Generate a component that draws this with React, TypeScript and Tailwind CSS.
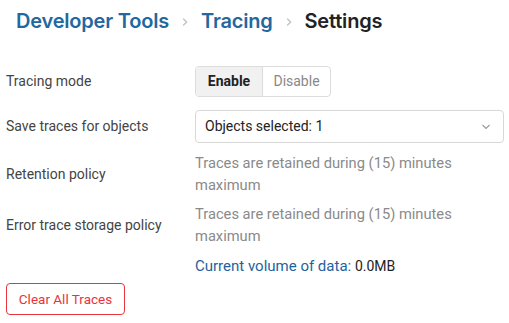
import React from "react";

export default function App() {
  return (
    <div className="w-[509px] h-[323px] bg-white overflow-hidden" style={{ fontFamily: "Roboto, 'Liberation Sans', sans-serif" }}>
      <div className="flex items-center gap-[12px] pl-[16px] pt-[5px] h-[36px] text-[20px] font-semibold" style={{ fontFamily: "Inter, 'Liberation Sans', Arial, sans-serif" }}>
        <span className="text-[#23679f] tracking-[-0.2px]">Developer Tools</span>
        <svg width="8" height="10" viewBox="0 0 8 10" className="mt-[2px]"><path d="M2.2 1.6 L5.6 5 L2.2 8.4" fill="none" stroke="#bdbdbd" strokeWidth="1.3" /></svg>
        <span className="text-[#23679f] tracking-[-0.2px]">Tracing</span>
        <svg width="8" height="10" viewBox="0 0 8 10" className="mt-[2px]"><path d="M2.2 1.6 L5.6 5 L2.2 8.4" fill="none" stroke="#bdbdbd" strokeWidth="1.3" /></svg>
        <span className="text-[#222] tracking-[-0.2px]">Settings</span>
      </div>
      <div className="pl-[6px] pr-[5px] mt-[30px] text-[14px]">
        <div className="flex items-center h-[31px]">
          <div className="w-[189px] text-[#444]">Tracing mode</div>
          <div className="flex h-[31px] rounded-[4px] border border-[#dcdcdc] overflow-hidden">
            <div className="w-[67px] flex items-center justify-center bg-[#f1f1f1] font-bold text-[#222] border-r border-[#dcdcdc]">Enable</div>
            <div className="w-[67px] flex items-center justify-center text-[#888]">Disable</div>
          </div>
        </div>
        <div className="flex items-center h-[33px] mt-[13px]">
          <div className="w-[189px] text-[#444]">Save traces for objects</div>
          <div className="flex-1 flex items-center justify-between h-[33px] rounded-[4px] border border-[#d8d8d8] pl-[9px] pr-[12px] text-[#222]">
            <span>Objects selected: 1</span>
            <svg width="10" height="6" viewBox="0 0 10 6"><path d="M1.5 1 L5 4.5 L8.5 1" fill="none" stroke="#999" strokeWidth="1.1" /></svg>
          </div>
        </div>
        <div className="flex items-center mt-[9px]">
          <div className="w-[189px] text-[#444]">Retention policy</div>
          <div className="flex-1 text-[#8a8a8a] text-[14.7px] leading-[22px]">Traces are retained during (15) minutes<br />maximum</div>
        </div>
        <div className="flex items-center mt-[7px]">
          <div className="w-[189px] text-[#444]">Error trace storage policy</div>
          <div className="flex-1 text-[#8a8a8a] text-[14.7px] leading-[22px]">Traces are retained during (15) minutes<br />maximum</div>
        </div>
        <div className="flex mt-[8px] leading-[22px]">
          <div className="w-[189px]" />
          <div><span className="text-[#1e62a0] text-[15px]">Current volume of data: </span><span className="text-[#222]">0.0MB</span></div>
        </div>
        <button className="mt-[6px] h-[32px] w-[119px] rounded-[4px] border border-[#e8343c] text-[#e8343c] text-[13.5px] flex items-center justify-center">Clear All Traces</button>
      </div>
    </div>
  );
}
